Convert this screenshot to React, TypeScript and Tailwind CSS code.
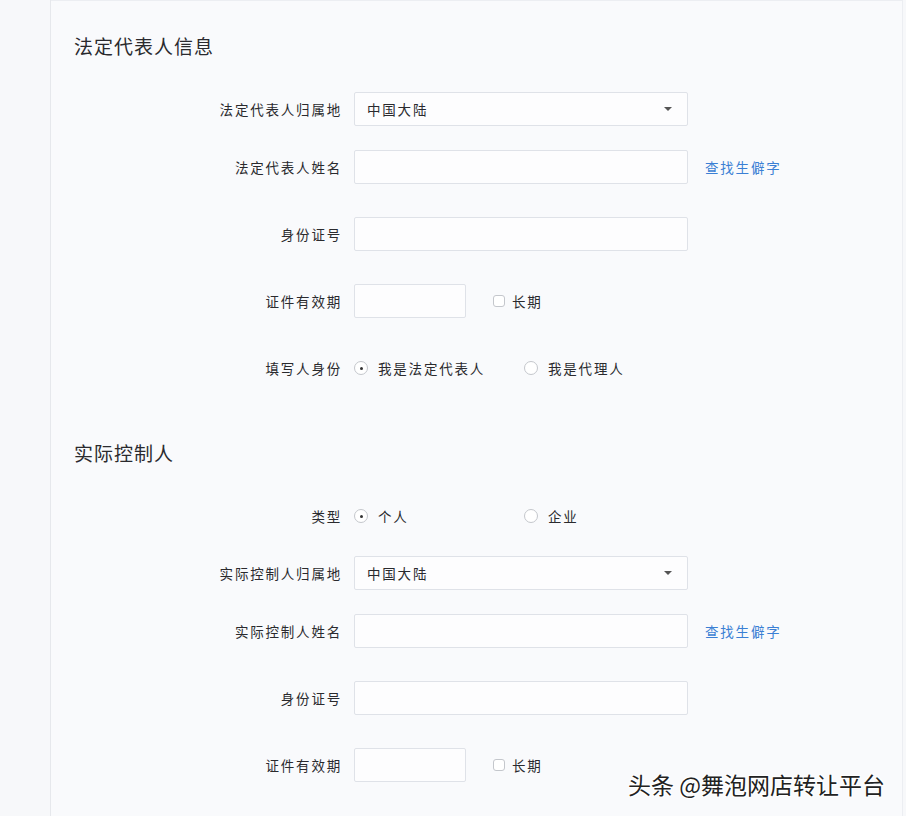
import React from "react";

const font = { fontFamily: '"Noto Sans CJK SC", "Noto Sans", sans-serif' };

function Label({ children }: { children: React.ReactNode }) {
  return (
    <div className="w-[303px] shrink-0 pr-[12px] text-right text-[13.5px] tracking-[1.8px] text-[#2a2a2e] leading-[34px]">
      {children}
    </div>
  );
}

function Input({ w = "w-[334px]" }: { w?: string }) {
  return <div className={`${w} h-[34px] rounded-[2px] border border-[#dfe2e8] bg-[#fdfdfe]`} />;
}

function Select() {
  return (
    <div className="flex h-[34px] w-[334px] items-center justify-between rounded-[2px] border border-[#dfe2e8] bg-[#fdfdfe] pl-[12px] pr-[14px]">
      <span className="text-[13.5px] tracking-[1.8px] text-[#2a2a2e]">中国大陆</span>
      <svg width="10" height="6" viewBox="0 0 10 6">
        <path d="M1 1 L9 1 L5 5 Z" fill="#555" />
      </svg>
    </div>
  );
}

function Radio({ checked }: { checked?: boolean }) {
  return (
    <span className="flex h-[14px] w-[14px] items-center justify-center rounded-full border border-[#c4c7cc] bg-white">
      {checked && <span className="h-[3px] w-[3px] rounded-full bg-[#333]" />}
    </span>
  );
}

function RadioGroup({ a, b }: { a: string; b: string }) {
  return (
    <div className="flex h-[34px] items-center text-[13.5px] tracking-[1.8px] text-[#2a2a2e]">
      <div className="flex w-[170px] items-center">
        <Radio checked />
        <span className="ml-[10px]">{a}</span>
      </div>
      <div className="flex items-center">
        <Radio />
        <span className="ml-[10px]">{b}</span>
      </div>
    </div>
  );
}

function DateRow() {
  return (
    <div className="flex h-[34px] items-center">
      <Label>证件有效期</Label>
      <Input w="w-[112px]" />
      <span className="ml-[27px] h-[12px] w-[12px] rounded-[3px] border border-[#c4c7cc] bg-white" />
      <span className="ml-[7px] text-[13.5px] tracking-[1.8px] text-[#2a2a2e]">长期</span>
    </div>
  );
}

function Link() {
  return <span className="ml-[17px] text-[13.5px] tracking-[1.8px] text-[#3b7fd4]">查找生僻字</span>;
}

export default function App() {
  return (
    <div className="relative flex h-[816px] w-[906px] overflow-hidden bg-[#f7f8fa]" style={font}>
      <div className="w-[51px] shrink-0 border-r border-[#e6e8ec] bg-[#f7f8fa]" />
      <div className="flex-1 border-r border-t border-[#eceef2] bg-[#f9fafc] pt-[33px] mr-[3px]">
        <div className="pl-[23px] text-[19px] leading-[24px] tracking-[1px] text-[#2a2a2e]">法定代表人信息</div>

        <div className="mt-[34px] flex h-[34px] items-center">
          <Label>法定代表人归属地</Label>
          <Select />
        </div>
        <div className="mt-[24px] flex h-[34px] items-center">
          <Label>法定代表人姓名</Label>
          <Input />
          <Link />
        </div>
        <div className="mt-[33px] flex h-[34px] items-center">
          <Label>身份证号</Label>
          <Input />
        </div>
        <div className="mt-[33px]">
          <DateRow />
        </div>
        <div className="mt-[33px] flex h-[34px] items-center">
          <Label>填写人身份</Label>
          <RadioGroup a="我是法定代表人" b="我是代理人" />
        </div>

        <div className="mt-[56px] pl-[23px] text-[19px] leading-[24px] tracking-[1px] text-[#2a2a2e]">实际控制人</div>

        <div className="mt-[34px] flex h-[34px] items-center">
          <Label>类型</Label>
          <RadioGroup a="个人" b="企业" />
        </div>
        <div className="mt-[23px] flex h-[34px] items-center">
          <Label>实际控制人归属地</Label>
          <Select />
        </div>
        <div className="mt-[24px] flex h-[34px] items-center">
          <Label>实际控制人姓名</Label>
          <Input />
          <Link />
        </div>
        <div className="mt-[33px] flex h-[34px] items-center">
          <Label>身份证号</Label>
          <Input />
        </div>
        <div className="mt-[33px]">
          <DateRow />
        </div>
      </div>
      <div
        className="absolute left-[628px] top-[769px] text-[23px] leading-[30px] text-[#222]"
        style={{ textShadow: "1px 1px 0 #fff, -1px -1px 0 #fff, 1px -1px 0 #fff, -1px 1px 0 #fff" }}
      >
        头条 @舞泡网店转让平台
      </div>
    </div>
  );
}
